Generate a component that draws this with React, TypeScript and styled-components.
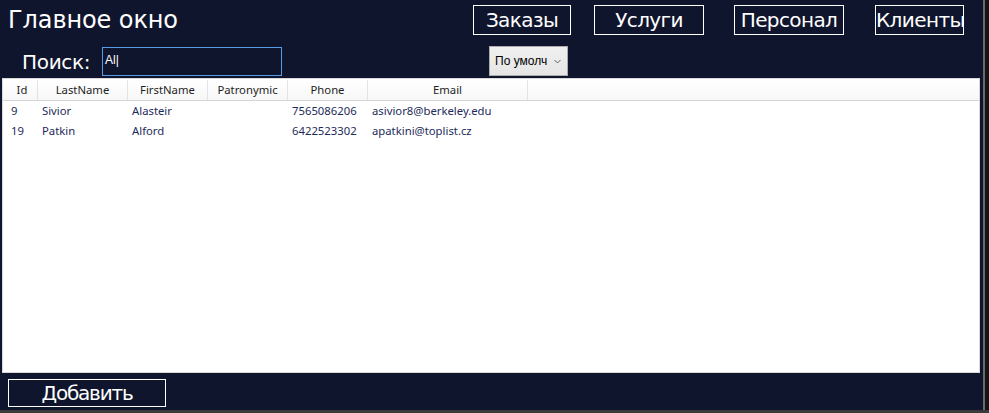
import * as React from 'react';
import styled, { createGlobalStyle } from 'styled-components';

const GlobalStyle = createGlobalStyle`
  html, body {
    margin: 0;
    padding: 0;
    background: #1b1b1b;
  }
`;

const Frame = styled.div`
  display: flex;
  flex-direction: column;
  width: 989px;
  height: 413px;
  overflow: hidden;
  background: #2a2a2a;
`;

const FrameRow = styled.div`
  display: flex;
  height: 410px;
`;

const Window = styled.div`
  display: flex;
  flex-direction: column;
  width: 985px;
  height: 410px;
  background: #10152e;
  font-family: 'DejaVu Sans', sans-serif;
  color: #ffffff;
`;

const RightEdge = styled.div`
  width: 4px;
  border-left: 2px solid #6b6b6b;
  background: #151515;
`;

const BottomEdge = styled.div`
  height: 3px;
  background: #3a3a3a;
`;

const TopBar = styled.div`
  display: flex;
  align-items: flex-start;
  height: 44px;
`;

const Title = styled.div`
  margin: 6px 0 0 8px;
  font-size: 24px;
  line-height: 28px;
  letter-spacing: -0.1px;
  white-space: nowrap;
`;

const Nav = styled.div`
  display: flex;
  margin-left: auto;
  margin-right: 19px;
  margin-top: 5px;
`;

const NavButton = styled.button<{ $w: number; $gap: number }>`
  width: ${p => p.$w}px;
  height: 30px;
  margin-left: ${p => p.$gap}px;
  padding: 0;
  border: 1px solid #ffffff;
  background: transparent;
  color: #ffffff;
  font-family: 'DejaVu Sans', sans-serif;
  font-size: 20px;
  letter-spacing: -0.6px;
  white-space: nowrap;
`;

const SearchBar = styled.div`
  display: flex;
  align-items: center;
  height: 34px;
  padding-left: 22px;
`;

const SearchLabel = styled.span`
  width: 80px;
  font-size: 20px;
  letter-spacing: -0.3px;
  margin-top: 1px;
`;

const SearchInput = styled.div`
  box-sizing: border-box;
  width: 180px;
  height: 29px;
  margin-top: 1px;
  border: 1px solid #569de5;
  padding: 5px 0 0 2px;
  font-family: 'Liberation Sans', sans-serif;
  font-size: 12px;
  color: #ffffff;
`;

const Combo = styled.div`
  box-sizing: border-box;
  display: flex;
  align-items: center;
  justify-content: space-between;
  width: 79px;
  height: 30px;
  margin-left: 207px;
  padding: 0 6px 0 5px;
  border: 1px solid #acacac;
  background: linear-gradient(#f0f0f0, #e5e5e5);
  color: #000000;
  font-family: 'Liberation Sans', sans-serif;
  font-size: 12px;
`;

const Chevron = styled.svg`
  width: 7px;
  height: 5px;
`;

const Grid = styled.div`
  display: flex;
  flex-direction: column;
  box-sizing: border-box;
  height: 295px;
  margin: 0 3px 0 2px;
  border: 1px solid #d9d9d9;
  background: #ffffff;
  font-family: 'Noto Sans', sans-serif;
  font-size: 11.3px;
  color: #1e1e1e;
`;

const HeaderRow = styled.div`
  display: flex;
  height: 20px;
  margin-top: 1px;
  padding-left: 4px;
  border-bottom: 1px solid #d5d5d5;
  background: linear-gradient(#ffffff, #f7f7f7);
`;

const HeaderCell = styled.div<{ $w: number }>`
  box-sizing: border-box;
  width: ${p => p.$w}px;
  border-right: 1px solid #e3e3e3;
  text-align: center;
  line-height: 20px;
  white-space: nowrap;
`;

const Filler = styled.div`
  flex: 1;
`;

const Row = styled.div`
  display: flex;
  height: 20px;
  padding-left: 4px;
  color: #1d2b5a;
`;

const Cell = styled.div<{ $w: number }>`
  box-sizing: border-box;
  width: ${p => p.$w}px;
  padding-left: 4px;
  line-height: 20px;
  white-space: nowrap;
`;

const Footer = styled.div`
  display: flex;
  align-items: flex-start;
  flex: 1;
  padding: 6px 0 0 8px;
`;

const AddButton = styled.button`
  width: 158px;
  height: 28px;
  padding: 0;
  border: 1px solid #ffffff;
  background: transparent;
  color: #ffffff;
  font-family: 'DejaVu Sans', sans-serif;
  font-size: 20px;
  letter-spacing: -1.2px;
`;

const columns = [
  { key: 'id', title: 'Id', w: 31 },
  { key: 'last', title: 'LastName', w: 90 },
  { key: 'first', title: 'FirstName', w: 80 },
  { key: 'patr', title: 'Patronymic', w: 80 },
  { key: 'phone', title: 'Phone', w: 80 },
  { key: 'email', title: 'Email', w: 160 },
];

const clients = [
  { id: '9', last: 'Sivior', first: 'Alasteir', patr: '', phone: '7565086206', email: 'asivior8@berkeley.edu' },
  { id: '19', last: 'Patkin', first: 'Alford', patr: '', phone: '6422523302', email: 'apatkini@toplist.cz' },
];

const navItems = [
  { label: 'Заказы', w: 98, gap: 0 },
  { label: 'Услуги', w: 110, gap: 23 },
  { label: 'Персонал', w: 110, gap: 30 },
  { label: 'Клиенты', w: 89, gap: 31 },
];

const App = () => {
  return (
    <>
      <GlobalStyle />
      <Frame>
        <FrameRow>
          <Window>
            <TopBar>
              <Title>Главное окно</Title>
              <Nav>
                {navItems.map(n => (
                  <NavButton key={n.label} $w={n.w} $gap={n.gap}>{n.label}</NavButton>
                ))}
              </Nav>
            </TopBar>
            <SearchBar>
              <SearchLabel>Поиск:</SearchLabel>
              <SearchInput>Al|</SearchInput>
              <Combo>
                По умолч
                <Chevron viewBox="0 0 7 5">
                  <path d="M0.5 1 L3.5 4 L6.5 1" fill="none" stroke="#606060" strokeWidth="1" />
                </Chevron>
              </Combo>
            </SearchBar>
            <Grid>
              <HeaderRow>
                {columns.map(c => (
                  <HeaderCell key={c.key} $w={c.w}>{c.title}</HeaderCell>
                ))}
                <Filler />
              </HeaderRow>
              {clients.map(r => (
                <Row key={r.id}>
                  {columns.map(c => (
                    <Cell key={c.key} $w={c.w}>{(r as Record<string, string>)[c.key]}</Cell>
                  ))}
                </Row>
              ))}
            </Grid>
            <Footer>
              <AddButton>Добавить</AddButton>
            </Footer>
          </Window>
          <RightEdge />
        </FrameRow>
        <BottomEdge />
      </Frame>
    </>
  );
};

export default App;
